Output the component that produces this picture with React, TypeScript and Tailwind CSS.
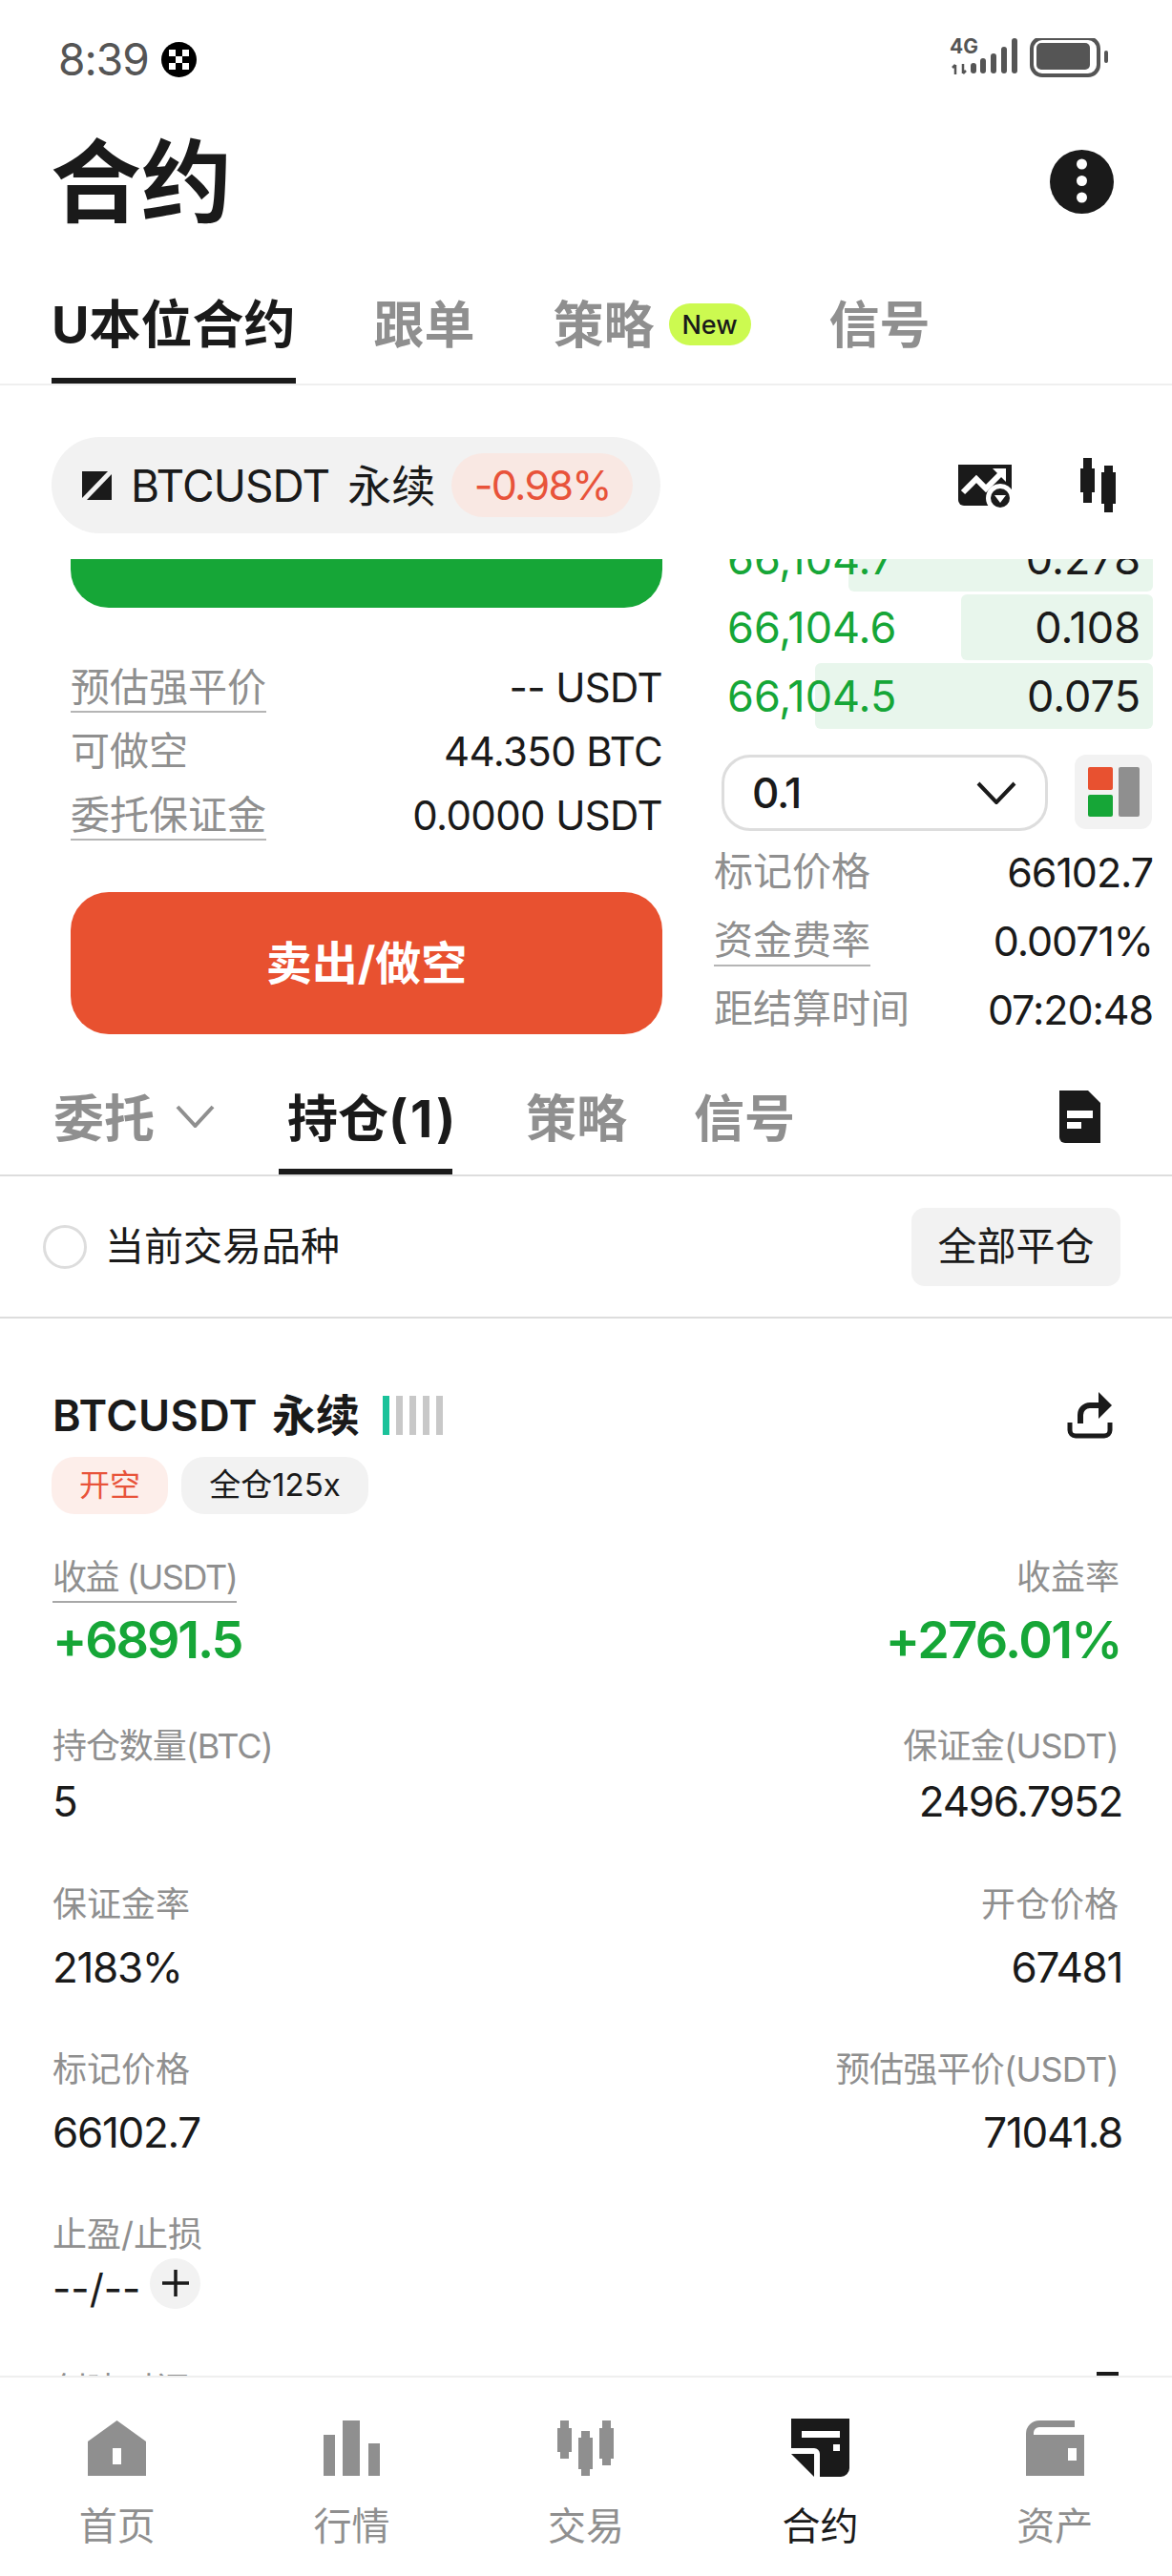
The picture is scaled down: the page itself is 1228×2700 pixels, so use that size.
import type { ReactNode } from "react";

const orderRows = [
  { price: "66,104.7", size: "0.278", depth: 319 },
  { price: "66,104.6", size: "0.108", depth: 201 },
  { price: "66,104.5", size: "0.075", depth: 354 },
];

function StatusIcons() {
  return (
    <div className="flex items-center">
      <svg width="166" height="45" viewBox="0 0 166 45" className="text-[#555555]">
        <rect x="22" y="26" width="6" height="11" rx="3" fill="currentColor" />
        <rect x="32" y="21" width="6" height="16" rx="3" fill="currentColor" />
        <rect x="43" y="16" width="6" height="21" rx="3" fill="currentColor" />
        <rect x="54" y="9" width="6" height="28" rx="3" fill="currentColor" />
        <rect x="65" y="0" width="6" height="37" rx="3" fill="currentColor" />
        <path d="M6 38V28M6 28l-3 3M14 27v10M14 37l3-3" stroke="currentColor" strokeWidth="2.5" fill="none" />
        <rect x="86" y="0" width="70" height="39" rx="11" fill="none" stroke="currentColor" strokeWidth="4" />
        <rect x="91" y="5" width="56" height="28" rx="5" fill="currentColor" />
        <rect x="162" y="13" width="4" height="13" rx="2" fill="currentColor" />
      </svg>
    </div>
  );
}

function OkxMark() {
  return (
    <svg width="37" height="37" viewBox="0 0 37 37">
      <circle cx="18.5" cy="18.5" r="18.5" fill="#000000" />
      <rect x="8" y="8" width="7" height="7" fill="#ffffff" />
      <rect x="22" y="8" width="7" height="7" fill="#ffffff" />
      <rect x="15" y="15" width="7" height="7" fill="#ffffff" />
      <rect x="8" y="22" width="7" height="7" fill="#ffffff" />
      <rect x="22" y="22" width="7" height="7" fill="#ffffff" />
    </svg>
  );
}

function Candles({ className }: { className?: string }) {
  return (
    <svg width="37" height="57" viewBox="0 0 37 57" className={className} fill="currentColor">
      <rect x="3" y="0" width="9" height="47" />
      <rect x="0" y="11" width="15" height="25" />
      <rect x="25" y="8" width="9" height="49" />
      <rect x="22" y="15" width="15" height="33" />
    </svg>
  );
}

function Label({ children, line }: { children: ReactNode; line?: boolean }) {
  return (
    <span className={`inline-block text-[#8f8f8f] ${line ? "border-b-2 border-[#b5b5b5]" : "border-b-2 border-transparent"}`}>
      {children}
    </span>
  );
}

function TradeRow({ label, value, line }: { label: string; value: string; line?: boolean }) {
  return (
    <div className="flex h-[67px] items-center justify-between text-[41px] leading-[50px]">
      <Label line={line}>{label}</Label>
      <span className="text-[42px] tracking-[-0.015em] text-[#1a1a1a]">{value}</span>
    </div>
  );
}

function InfoRow({ label, value, line }: { label: string; value: string; line?: boolean }) {
  return (
    <div className="flex h-[72px] items-center justify-between text-[41px] leading-[52px]">
      <Label line={line}>{label}</Label>
      <span className="text-[43px] tracking-[-0.025em] text-[#1a1a1a]">{value}</span>
    </div>
  );
}

function NavItem({ icon, label, active }: { icon: ReactNode; label: string; active?: boolean }) {
  return (
    <div className="flex flex-col items-center">
      <div className="flex h-[61px] items-center justify-center">{icon}</div>
      <span className={`mt-[22px] h-[60px] text-[40px] leading-[60px] ${active ? "text-[#1a1a1a]" : "text-[#8f8f8f]"}`}>{label}</span>
    </div>
  );
}

export default function App() {
  return (
    <div className="relative flex h-[2700px] w-[1228px] flex-col overflow-hidden bg-white [font-family:Inter,'Noto_Sans_CJK_SC',sans-serif] text-[#1a1a1a]">
      {/* status bar */}
      <div className="flex h-[124px] items-center justify-between pl-[61px] pr-[67px]">
        <div className="flex items-center gap-[13px]">
          <span className="text-[46px] leading-none tracking-[-0.02em] text-[#555555]">8:39</span>
          <OkxMark />
        </div>
        <div className="relative">
          <span className="absolute -top-[2px] left-0 text-[21px] font-bold leading-[22px] text-[#555555]">4G</span>
          <StatusIcons />
        </div>
      </div>

      {/* title */}
      <div className="flex h-[144px] items-center justify-between pl-[53px] pr-[61px]">
        <h1 className="mb-[8px] text-[95px] font-bold leading-[110px]">合约</h1>
        <svg width="67" height="67" viewBox="0 0 67 67" className="mb-[11px]">
          <circle cx="33.5" cy="33.5" r="33.5" fill="#1a1a1a" />
          <circle cx="33.5" cy="15" r="5.5" fill="#ffffff" />
          <circle cx="33.5" cy="32.5" r="5.5" fill="#ffffff" />
          <circle cx="33.5" cy="50" r="5.5" fill="#ffffff" />
        </svg>
      </div>

      {/* product tabs */}
      <div className="mt-[26px] flex h-[110px] gap-[82px] border-b-2 border-[#efefef] pl-[54px] text-[53px] font-bold leading-[60px] text-[#8f8f8f]">
        <div className="h-[108px] border-b-[6px] border-[#1a1a1a] pt-[17px] text-[54px] text-[#1a1a1a]">U本位合约</div>
        <div className="pt-[17px]">跟单</div>
        <div className="flex items-start gap-[15px] pt-[17px]">
          策略
          <span className="mt-[7px] flex h-[44px] w-[86px] items-center justify-center rounded-[22px] bg-[#ccfa50] text-[27px] font-medium leading-none text-[#1a1a1a]">New</span>
        </div>
        <div className="pt-[17px]">信号</div>
      </div>

      {/* symbol */}
      <div className="flex h-[182px] items-start pl-[54px] pt-[54px]">
        <div className="flex h-[101px] w-[638px] items-center rounded-full bg-[#f2f2f2] pl-[32px]">
          <svg width="31" height="30" viewBox="0 0 31 30" fill="#1a1a1a">
            <path d="M0 0H27L0 28Z" />
            <path d="M31 3V30H5Z" />
          </svg>
          <span className="ml-[20px] text-[46px] leading-none tracking-[-0.02em]">BTCUSDT</span>
          <span className="ml-[19px] text-[46px] leading-none">永续</span>
          <span className="ml-[17px] flex h-[67px] w-[190px] items-center justify-center rounded-[34px] bg-[#f9e8e3] text-[43px] leading-none tracking-[-0.04em] text-[#e8533a]">-0.98%</span>
        </div>
        <svg width="64" height="50" viewBox="0 0 64 50" className="ml-[312px] mt-[29px]">
          <path d="M0 0H56V37a6 6 0 0 1-6 6H6a6 6 0 0 1-6-6Z" fill="#1a1a1a" />
          <path d="M5 29L19 15L29 25L44 10" fill="none" stroke="#ffffff" strokeWidth="6" />
          <path d="M36 4H50V18Z" fill="#ffffff" />
          <circle cx="44" cy="35" r="15" fill="#ffffff" />
          <circle cx="44" cy="35" r="10" fill="#1a1a1a" />
          <path d="M38 32H50L44 40Z" fill="#ffffff" />
        </svg>
        <Candles className="ml-[64px] mt-[22px] text-[#1a1a1a]" />
      </div>

      {/* scrolling body */}
      <div className="min-h-0 flex-1 overflow-hidden">
        <div className="-mt-[98px]">
          <div className="flex">
            <div className="ml-[74px] w-[620px]">
              <div className="h-[149px] rounded-[40px] bg-[#16a637]" />
              <div className="mt-[50px]">
                <TradeRow label="预估强平价" value="-- USDT" line />
                <TradeRow label="可做空" value="44.350 BTC" />
                <TradeRow label="委托保证金" value="0.0000 USDT" line />
              </div>
              <div className="mt-[47px] flex h-[149px] items-center justify-center rounded-[40px] bg-[#e85130] text-[48px] font-bold text-white">
                卖出/做空
              </div>
            </div>

            <div className="ml-[55px] w-[459px]">
              <div className="mt-[63px] flex flex-col gap-[3px]">
                {orderRows.map((row) => (
                  <div key={row.price} className="relative flex h-[69px] items-center justify-between pl-[13px] pr-[13px] text-[45px]">
                    <div className="absolute bottom-0 right-0 top-0 rounded-[6px] bg-[#e8f6ec]" style={{ width: row.depth }} />
                    <span className="relative text-[#16a637]">{row.price}</span>
                    <span className="relative">{row.size}</span>
                  </div>
                ))}
              </div>
              <div className="mt-[27px] flex gap-[28px] pl-[7px]">
                <div className="flex h-[80px] w-[342px] items-center justify-between rounded-[30px] border-[3px] border-[#dddddd] pl-[29px] pr-[30px] text-[44px] font-medium tracking-[-0.03em]">
                  0.1
                  <svg width="42" height="24" viewBox="0 0 42 24" fill="none" stroke="#1a1a1a" strokeWidth="4">
                    <path d="M2 2L21 22L40 2" />
                  </svg>
                </div>
                <div className="flex h-[78px] w-[81px] gap-[6px] rounded-[12px] bg-[#f2f2f2] pl-[14px] pt-[13px]">
                  <div className="flex flex-col gap-[5px]">
                    <div className="h-[24px] w-[26px] rounded-[2px] bg-[#e85130]" />
                    <div className="h-[23px] w-[26px] rounded-[2px] bg-[#16a637]" />
                  </div>
                  <div className="h-[52px] w-[22px] rounded-[2px] bg-[#8f8f8f]" />
                </div>
              </div>
              <div className="mt-[7px] -ml-px">
                <InfoRow label="标记价格" value="66102.7" />
                <InfoRow label="资金费率" value="0.0071%" line />
                <InfoRow label="距结算时间" value="07:20:48" />
              </div>
            </div>
          </div>

          {/* position tabs */}
          <div className="mt-[19px] flex h-[120px] border-b-2 border-[#dddddd] pl-[56px] text-[53px] font-bold leading-[60px] text-[#8f8f8f]">
            <div className="pt-[30px]">委托</div>
            <svg width="41" height="24" viewBox="0 0 41 24" fill="none" stroke="#8f8f8f" strokeWidth="4" className="ml-[22px] mt-[45px]">
              <path d="M2 2L20.5 22L39 2" />
            </svg>
            <div className="ml-[67px] h-[118px] w-[182px] whitespace-nowrap border-b-[6px] border-[#1a1a1a] pl-[9px] pt-[30px] text-[#1a1a1a]">
              持仓<span className="text-[54px] tracking-[0.05em]">(1)</span>
            </div>
            <div className="ml-[77px] pt-[30px]">策略</div>
            <div className="ml-[70px] pt-[30px]">信号</div>
            <svg width="43" height="55" viewBox="0 0 43 55" className="ml-[277px] mt-[30px]">
              <path d="M0 0H30L43 13V55H6a6 6 0 0 1-6-6Z" fill="#1a1a1a" />
              <rect x="8" y="21" width="27" height="8" fill="#ffffff" />
              <rect x="8" y="33" width="15" height="7" fill="#ffffff" />
            </svg>
          </div>

          {/* filter row */}
          <div className="flex h-[149px] items-center justify-between border-b-2 border-[#dddddd] pl-[45px] pr-[54px]">
            <div className="flex items-center gap-[19px]">
              <div className="h-[46px] w-[46px] rounded-full border-[3px] border-[#dddddd]" />
              <span className="text-[41px]">当前交易品种</span>
            </div>
            <div className="flex h-[82px] w-[219px] items-center justify-center rounded-[14px] bg-[#f2f2f2] text-[41px]">全部平仓</div>
          </div>

          {/* position card */}
          <div className="pl-[55px] pr-[56px] pt-[71px]">
            <div className="flex h-[60px] items-center">
              <span className="text-[45px] font-semibold leading-none tracking-[0.01em]">BTCUSDT</span>
              <span className="ml-[15px] text-[46px] font-semibold leading-none">永续</span>
              <div className="ml-[24px] flex h-[41px] gap-[7px]">
                <div className="w-[7px] bg-[#1bc29a]" />
                <div className="w-[7px] bg-[#c8c8c8]" />
                <div className="w-[7px] bg-[#c8c8c8]" />
                <div className="w-[7px] bg-[#c8c8c8]" />
                <div className="w-[7px] bg-[#c8c8c8]" />
              </div>
              <svg width="48" height="49" viewBox="0 0 48 49" fill="none" className="ml-auto mr-[6px]">
                <path d="M3 32V40a6 6 0 0 0 6 6H39a6 6 0 0 0 6-6V32" stroke="#1a1a1a" strokeWidth="5" />
                <path d="M14 33V24a10 10 0 0 1 10-10H36" stroke="#1a1a1a" strokeWidth="6" />
                <path d="M33 0L47 14L33 28Z" fill="#1a1a1a" />
              </svg>
            </div>
            <div className="mt-[14px] flex gap-[14px] text-[32px]">
              <div className="-ml-px flex h-[60px] w-[122px] items-center justify-center rounded-[24px] bg-[#fdeeea] text-[#e8533a]">开空</div>
              <div className="flex h-[60px] w-[196px] items-center justify-center rounded-[24px] bg-[#f2f2f2] text-[33px]">全仓125x</div>
            </div>

            <div className="mt-[41px] flex justify-between">
              <div className="flex flex-col items-start">
                <div className="h-[52px] border-b-2 border-[#a8a8a8] text-[36px] leading-[50px] tracking-[-0.04em] text-[#8f8f8f]">收益 (USDT)</div>
                <div className="mt-[8px] flex h-[60px] items-center text-[54px] font-semibold tracking-[-0.04em] text-[#16a637]">+6891.5</div>
              </div>
              <div className="flex flex-col items-end">
                <div className="-mr-px h-[52px] text-[36px] leading-[50px] text-[#8f8f8f]">收益率</div>
                <div className="-mr-[3px] mt-[8px] flex h-[60px] items-center text-[54px] font-semibold tracking-[-0.03em] text-[#16a637]">+276.01%</div>
              </div>
            </div>

            <div className="mt-[57px] flex justify-between">
              <div className="flex flex-col items-start">
                <div className="h-[50px] text-[36px] leading-[50px] tracking-[-0.03em] text-[#8f8f8f]">持仓数量(BTC)</div>
                <div className="mt-[3px] h-[60px] text-[44px] leading-[60px] tracking-[-0.03em]">5</div>
              </div>
              <div className="flex flex-col items-end">
                <div className="h-[50px] text-[36px] leading-[50px] tracking-[-0.02em] text-[#8f8f8f]">保证金(USDT)</div>
                <div className="-mr-[4px] mt-[3px] h-[60px] text-[44px] leading-[60px] tracking-[-0.03em]">2496.7952</div>
              </div>
            </div>
            <div className="mt-[53px] flex justify-between">
              <div className="flex flex-col items-start">
                <div className="h-[50px] text-[36px] leading-[50px] text-[#8f8f8f]">保证金率</div>
                <div className="mt-[11px] h-[60px] text-[44px] leading-[60px] tracking-[-0.03em]">2183%</div>
              </div>
              <div className="flex flex-col items-end">
                <div className="h-[50px] text-[36px] leading-[50px] text-[#8f8f8f]">开仓价格</div>
                <div className="-mr-[4px] mt-[11px] h-[60px] text-[44px] leading-[60px] tracking-[-0.03em]">67481</div>
              </div>
            </div>
            <div className="mt-[52px] flex justify-between">
              <div className="flex flex-col items-start">
                <div className="h-[50px] text-[36px] leading-[50px] text-[#8f8f8f]">标记价格</div>
                <div className="mt-[11px] h-[60px] text-[44px] leading-[60px] tracking-[-0.03em]">66102.7</div>
              </div>
              <div className="flex flex-col items-end">
                <div className="h-[50px] text-[36px] leading-[50px] tracking-[-0.02em] text-[#8f8f8f]">预估强平价(USDT)</div>
                <div className="-mr-[4px] mt-[11px] h-[60px] text-[44px] leading-[60px] tracking-[-0.03em]">71041.8</div>
              </div>
            </div>

            <div className="mt-[52px]">
              <div className="h-[50px] text-[36px] leading-[50px] text-[#8f8f8f]">止盈/止损</div>
              <div className="mt-[1px] flex h-[60px] items-center gap-[10px]">
                <span className="text-[42px]">--/--</span>
                <div className="-mt-[10px] flex h-[53px] w-[53px] items-center justify-center rounded-full bg-[#f2f2f2]">
                  <svg width="30" height="30" viewBox="0 0 30 30" stroke="#1a1a1a" strokeWidth="3.5">
                    <path d="M15 1V29M1 15H29" />
                  </svg>
                </div>
              </div>
            </div>

            <div className="mt-[52px] flex justify-between">
              <div className="h-[50px] text-[36px] leading-[50px] text-[#8f8f8f]">创建时间</div>
              <div className="mt-[6px] h-[20px] w-[23px] bg-[#1a1a1a]" />
            </div>
          </div>
        </div>
      </div>

      {/* bottom nav */}
      <div className="grid h-[210px] shrink-0 grid-cols-5 border-t-2 border-[#efefef] bg-white pt-[43px]">
        <NavItem
          label="首页"
          icon={
            <svg width="61" height="58" viewBox="0 0 61 58">
              <path fillRule="evenodd" d="M30.5 0L61 22V58H0V22ZM26 29V46H35V29Z" fill="#8f8f8f" />
            </svg>
          }
        />
        <NavItem
          label="行情"
          icon={
            <svg width="59" height="58" viewBox="0 0 59 58" fill="#8f8f8f">
              <rect x="0" y="15" width="12" height="43" />
              <rect x="20" y="0" width="18" height="58" />
              <rect x="47" y="24" width="12" height="34" />
            </svg>
          }
        />
        <NavItem
          label="交易"
          icon={
            <svg width="59" height="58" viewBox="0 0 59 58" fill="#8f8f8f">
              <rect x="3" y="0" width="9" height="40" />
              <rect x="0" y="8" width="15" height="25" />
              <rect x="25" y="11" width="9" height="47" />
              <rect x="22" y="18" width="15" height="33" />
              <rect x="47" y="0" width="9" height="47" />
              <rect x="44" y="8" width="15" height="32" />
            </svg>
          }
        />
        <NavItem
          active
          label="合约"
          icon={
            <svg width="61" height="61" viewBox="0 0 61 61" fill="#1a1a1a">
              <path d="M0 0H61V52a9 9 0 0 1-9 9H30V37a6 6 0 0 0-6-6H0Z" />
              <path d="M0 37H24V61Z" />
              <rect x="11" y="13" width="40" height="7" fill="#ffffff" />
              <rect x="44" y="27" width="7" height="7" fill="#ffffff" />
            </svg>
          }
        />
        <NavItem
          label="资产"
          icon={
            <svg width="61" height="58" viewBox="0 0 61 58">
              <path fillRule="evenodd" d="M0 58V14A14 14 0 0 1 14 0H51V7H14a6 6 0 0 0-6 6V15H61V58ZM44 29V42H53V29Z" fill="#8f8f8f" />
            </svg>
          }
        />
      </div>
    </div>
  );
}
